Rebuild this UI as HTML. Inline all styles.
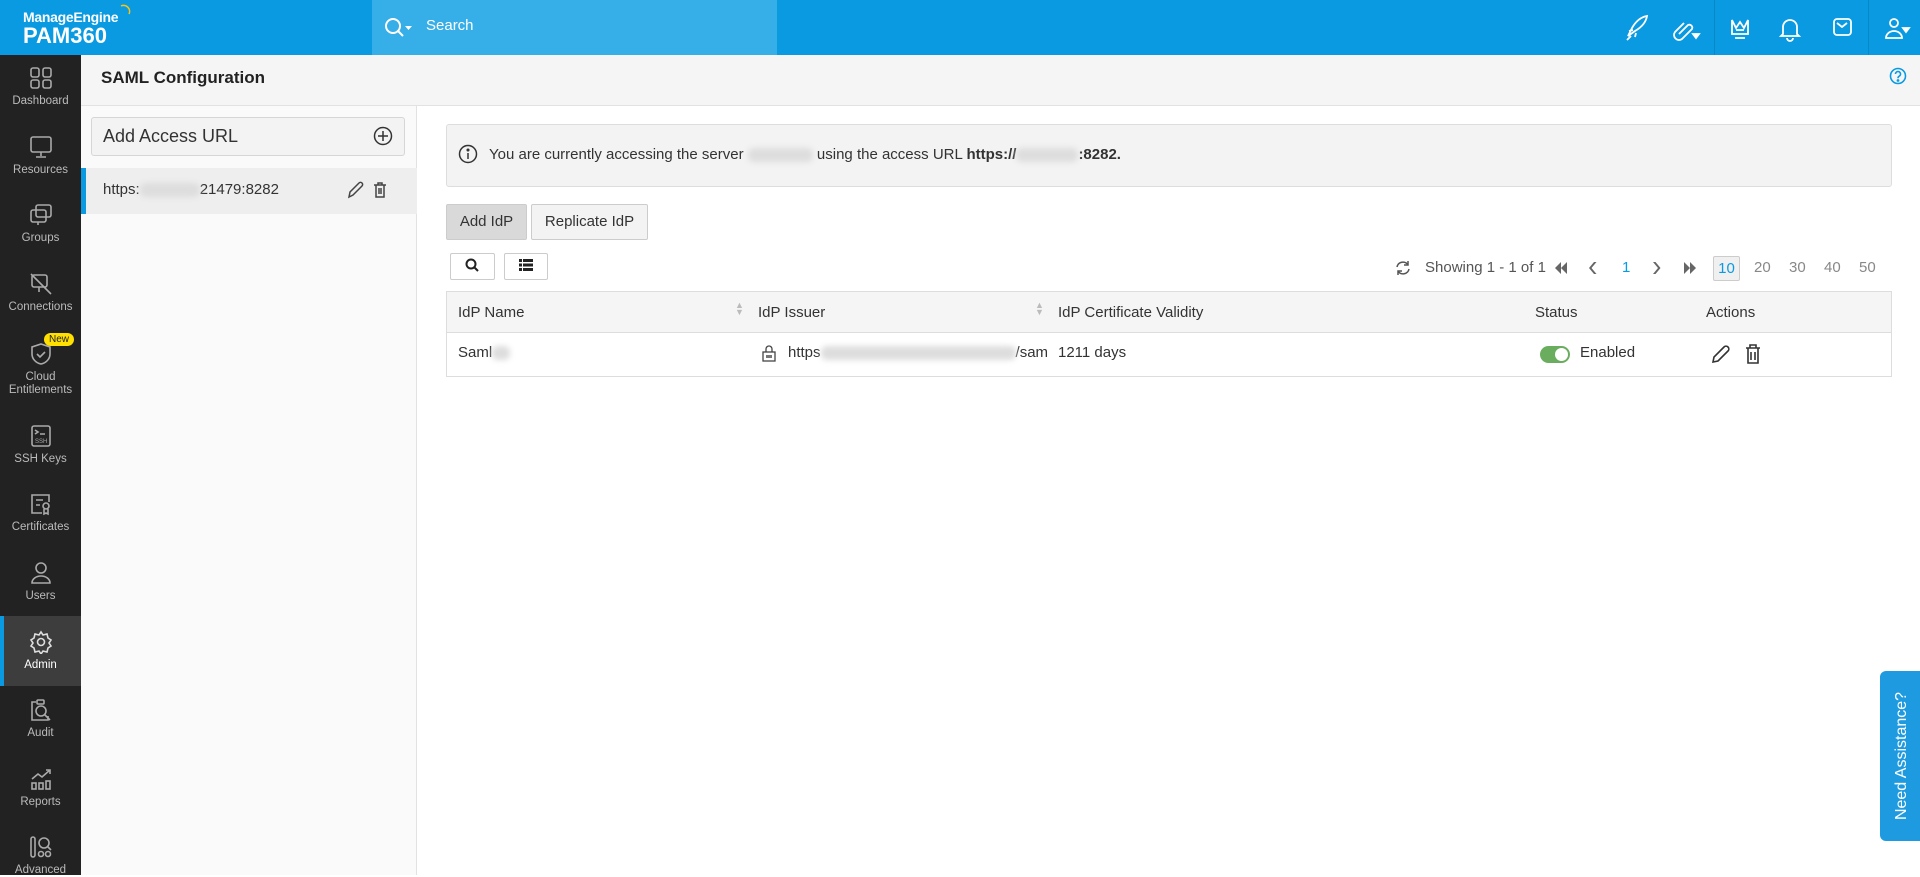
<!DOCTYPE html>
<html><head><meta charset="utf-8"><style>
*{box-sizing:border-box;margin:0;padding:0}
body{width:1920px;height:875px;overflow:hidden;font-family:"Liberation Sans",sans-serif;background:#fff;color:#333;position:relative;font-size:15px}
.abs{position:absolute}
#hdr{left:0;top:0;width:1920px;height:55px;background:#0a9ae2}
#srch{left:372px;top:0;width:405px;height:55px;background:#36aee8}
#side{left:0;top:55px;width:81px;height:820px;background:#222}
.si{position:absolute;left:0;width:81px;text-align:center;color:#bbb;font-size:11.5px;line-height:13px}
.si svg{display:block;margin:0 auto 5px}
#title{left:81px;top:55px;width:1839px;height:51px;background:#f5f5f5;border-bottom:1px solid #e2e2e2}
#lp{left:81px;top:106px;width:336px;height:769px;background:#fafafa;border-right:1px solid #e2e2e2}
.btn{position:absolute;border:1px solid #ccc;border-radius:2px;background:#f3f3f3;font-size:15px;color:#333;text-align:center}
.th{position:absolute;top:292px;font-size:15px;color:#333}
.blur{display:inline-block;background:#ddd;filter:blur(3px);height:14px;vertical-align:middle;border-radius:6px}
.pg{position:absolute;top:259px;font-size:15px;color:#888}
</style></head><body>
<div id="hdr" class="abs"></div>
<div id="srch" class="abs"></div>
<div class="abs" style="left:23px;top:9px;color:#fff;font-size:14px;font-weight:bold;letter-spacing:-0.3px">ManageEngine</div>
<div class="abs" style="left:23px;top:23px;color:#fff;font-size:22px;font-weight:bold">PAM360</div>
<svg class="abs" style="left:118px;top:4px" width="14" height="14"><path d="M3 2a6 6 0 0 1 8 8" stroke="#f5c518" stroke-width="1.5" fill="none"/></svg>
<svg class="abs" style="left:384px;top:16px" width="30" height="22"><circle cx="9" cy="10" r="7" stroke="#fff" stroke-width="2" fill="none"/><path d="M14 15l5 5" stroke="#fff" stroke-width="2"/><path d="M21 10h7l-3.5 4z" fill="#fff"/></svg>
<div class="abs" style="left:426px;top:17px;color:#fff;font-size:15px">Search</div>
<div class="abs" style="left:1714px;top:0;width:1px;height:55px;background:#0888c8"></div>
<div class="abs" style="left:1868px;top:0;width:1px;height:55px;background:#0888c8"></div>
<svg class="abs" style="left:1624px;top:14px" width="296" height="28" fill="none" stroke="#fff" stroke-width="1.8">
<path d="M4 22l4-8c4-7 9-11 15-12-1 6-5 11-12 15z M9 16l-4 1 M12 19l-1 4 M3 26l4-4"/>
<path d="M55 20l9-9a3 3 0 0 1 4 4l-10 10a5 5 0 0 1-7-7l9-9"/><path d="M69 20h6l-3 4z" fill="#fff"/>
<path d="M108 6l4 8 4-6 4 6 4-8v14h-16z M111 24h10 M112 16h8"/>
<path d="M159 20v-7a7 7 0 0 1 14 0v7l2 2h-18z M163 24a3 3 0 0 0 6 0"/>
<rect x="210" y="5" width="17" height="16" rx="3"/><path d="M213 9l5 4 5-4"/>
<circle cx="270" cy="9" r="4"/><path d="M262 24a8 7 0 0 1 16 0z"/><path d="M279 14h6l-3 4z" fill="#fff"/>
</svg>
<div id="side" class="abs"></div>
<div class="abs" style="left:0;top:616px;width:81px;height:70px;background:#3d3d3d"></div>
<div class="abs" style="left:0;top:616px;width:4px;height:70px;background:#0a9ae2"></div>
<div class="si" style="top:66px"><svg width="24" height="24" fill="none" stroke="#aaa" stroke-width="1.6"><rect x="2" y="2" width="8" height="9" rx="2"/><rect x="14" y="2" width="8" height="9" rx="2"/><rect x="2" y="14" width="8" height="8" rx="2"/><rect x="14" y="14" width="8" height="8" rx="2"/></svg>Dashboard</div>
<div class="si" style="top:135px"><svg width="24" height="24" fill="none" stroke="#aaa" stroke-width="1.6"><rect x="2" y="2" width="20" height="15" rx="2"/><path d="M12 17v4M7 22h10"/></svg>Resources</div>
<div class="si" style="top:203px"><svg width="24" height="24" fill="none" stroke="#aaa" stroke-width="1.6"><rect x="7" y="2" width="15" height="12" rx="2"/><rect x="2" y="7" width="15" height="12" rx="2"/><path d="M9 19v3"/></svg>Groups</div>
<div class="si" style="top:272px"><svg width="24" height="24" fill="none" stroke="#aaa" stroke-width="1.6"><rect x="3" y="3" width="15" height="12" rx="2"/><path d="M2 2l20 20M10 15v5"/></svg>Connections</div>
<div class="si" style="top:342px"><svg width="24" height="24" fill="none" stroke="#aaa" stroke-width="1.6"><path d="M12 2l9 3v7c0 5-4 9-9 10-5-1-9-5-9-10V5z"/><path d="M8 12l3 3 5-5"/></svg>Cloud<br>Entitlements</div>
<div class="abs" style="left:44px;top:333px;background:#ffe000;color:#222;font-size:10px;border-radius:8px;padding:1px 5px">New</div>
<div class="si" style="top:424px"><svg width="24" height="24" fill="none" stroke="#aaa" stroke-width="1.6"><rect x="3" y="2" width="18" height="20" rx="2"/><path d="M6 6l3 2-3 2M11 10h5"/><text x="6" y="19" font-size="6" fill="#aaa" stroke="none" font-family="Liberation Sans">SSH</text></svg>SSH Keys</div>
<div class="si" style="top:492px"><svg width="24" height="24" fill="none" stroke="#aaa" stroke-width="1.6"><path d="M20 10V3H3v18h10"/><path d="M7 8h7M7 13h4"/><circle cx="17" cy="14" r="3"/><path d="M15 17v5l2-1 2 1v-5"/></svg>Certificates</div>
<div class="si" style="top:561px"><svg width="24" height="24" fill="none" stroke="#aaa" stroke-width="1.6"><circle cx="12" cy="7" r="5"/><path d="M3 22a9 7 0 0 1 18 0z"/></svg>Users</div>
<div class="si" style="top:630px;color:#fff"><svg width="24" height="24" fill="none" stroke="#ddd" stroke-width="1.6"><path d="M12 2l2 3 4-1 1 4 3 2-2 3 2 3-3 2-1 4-4-1-2 3-2-3-4 1-1-4-3-2 2-3-2-3 3-2 1-4 4 1z"/><circle cx="12" cy="12" r="3.5"/></svg>Admin</div>
<div class="si" style="top:698px"><svg width="24" height="24" fill="none" stroke="#aaa" stroke-width="1.6"><path d="M7 4H3v18h16v-4"/><rect x="8" y="2" width="7" height="4" rx="1"/><circle cx="12" cy="13" r="5"/><path d="M16 17l5 5"/></svg>Audit</div>
<div class="si" style="top:767px"><svg width="24" height="24" fill="none" stroke="#aaa" stroke-width="1.6"><path d="M3 12l6-5 4 3 8-7M17 3h4v4"/><rect x="3" y="16" width="4" height="6"/><rect x="10" y="16" width="4" height="6"/><rect x="17" y="14" width="4" height="8"/></svg>Reports</div>
<div class="si" style="top:835px"><svg width="24" height="24" fill="none" stroke="#aaa" stroke-width="1.6"><rect x="2" y="2" width="4" height="20" rx="2"/><circle cx="15" cy="8" r="5"/><path d="M19 12l3 3"/><circle cx="12" cy="19" r="2.5"/><circle cx="19" cy="19" r="2.5"/></svg>Advanced</div>
<div id="title" class="abs"></div>
<div class="abs" style="left:101px;top:68px;font-size:17px;font-weight:bold;color:#222">SAML Configuration</div>
<svg class="abs" style="left:1889px;top:67px" width="18" height="18" fill="none" stroke="#0a9ae2" stroke-width="1.6"><circle cx="9" cy="9" r="7.5"/><path d="M6.5 7a2.5 2.5 0 1 1 3.5 2.3c-1 .5-1 1-1 2"/><circle cx="9" cy="13.5" r=".6" fill="#0a9ae2"/></svg>
<div id="lp" class="abs"></div>
<div class="abs" style="left:91px;top:117px;width:314px;height:39px;background:#f3f3f3;border:1px solid #d6d6d6;border-radius:3px"></div>
<div class="abs" style="left:103px;top:126px;font-size:18px;color:#333">Add Access URL</div>
<svg class="abs" style="left:373px;top:126px" width="20" height="20" fill="none" stroke="#333" stroke-width="1.5"><circle cx="10" cy="10" r="8.5"/><path d="M10 5v10M5 10h10"/></svg>
<div class="abs" style="left:81px;top:168px;width:336px;height:46px;background:#eee"></div>
<div class="abs" style="left:81px;top:168px;width:5px;height:46px;background:#0a9ae2"></div>
<div class="abs" style="left:103px;top:181px;font-size:15px;color:#333">https:<span class="blur" style="width:60px"></span>21479:8282</div>
<svg class="abs" style="left:346px;top:180px" width="50" height="20" fill="none" stroke="#444" stroke-width="1.5"><path d="M3 17l1-5 9-9a2 2 0 0 1 3 3l-9 9z"/><path d="M28 5h12M32 5V3h4v2M30 5v12h8V5M33 8v6M35 8v6"/></svg>
<div class="abs" style="left:446px;top:124px;width:1446px;height:63px;background:#f3f3f3;border:1px solid #ddd;border-radius:3px"></div>
<svg class="abs" style="left:458px;top:144px" width="20" height="20" fill="none" stroke="#333" stroke-width="1.5"><circle cx="10" cy="10" r="8.5"/><path d="M10 9v6"/><circle cx="10" cy="6" r=".8" fill="#333"/></svg>
<div class="abs" style="left:489px;top:146px;font-size:15px;color:#333">You are currently accessing the server <span class="blur" style="width:65px"></span> using the access URL <b>https://<span class="blur" style="width:62px"></span>:8282.</b></div>
<div class="btn" style="left:446px;top:204px;width:81px;height:36px;line-height:34px;background:#d9d9d9">Add IdP</div>
<div class="btn" style="left:531px;top:204px;width:117px;height:36px;line-height:34px">Replicate IdP</div>
<div class="btn" style="left:450px;top:253px;width:45px;height:27px;background:#fff"></div>
<svg class="abs" style="left:464px;top:257px" width="16" height="16" fill="none" stroke="#222" stroke-width="2"><circle cx="7" cy="7" r="4.5"/><path d="M10 10l4 4"/></svg>
<div class="btn" style="left:504px;top:253px;width:44px;height:27px;background:#fff"></div>
<svg class="abs" style="left:519px;top:258px" width="14" height="14" fill="#222"><rect x="0" y="1" width="3" height="3"/><rect x="4" y="1" width="10" height="3"/><rect x="0" y="5.5" width="3" height="3"/><rect x="4" y="5.5" width="10" height="3"/><rect x="0" y="10" width="3" height="3"/><rect x="4" y="10" width="10" height="3"/></svg>
<svg class="abs" style="left:1394px;top:259px" width="18" height="18" fill="none" stroke="#555" stroke-width="1.5"><path d="M3 8a6 6 0 0 1 11-2M15 10a6 6 0 0 1-11 2"/><path d="M14 2v4h-4M4 16v-4h4"/></svg>
<div class="pg" style="left:1425px;color:#555">Showing 1 - 1 of 1</div>
<svg class="abs" style="left:1554px;top:259px" width="150" height="18" fill="#666"><path d="M1 9l6-6v12zM7 9l6-6v12z"/><path d="M35 9l5-6h2.5l-5 6 5 6h-2.5z"/><path d="M99 3h2.5l5 6-5 6h-2.5l5-6z"/><path d="M130 3l6 6-6 6zM136 3l6 6-6 6z"/></svg>
<div class="pg" style="left:1622px;color:#0a9ae2">1</div>
<div class="abs" style="left:1713px;top:256px;width:27px;height:25px;background:#f0f0f0;border:1px solid #ccc;border-radius:2px;color:#0a9ae2;font-size:15px;text-align:center;line-height:23px">10</div>
<div class="pg" style="left:1754px">20</div>
<div class="pg" style="left:1789px">30</div>
<div class="pg" style="left:1824px">40</div>
<div class="pg" style="left:1859px">50</div>
<div class="abs" style="left:446px;top:291px;width:1446px;height:86px;border:1px solid #ddd"></div>
<div class="abs" style="left:447px;top:292px;width:1444px;height:41px;background:#f5f5f5;border-bottom:1px solid #ddd"></div>
<div class="th" style="left:458px;top:304px">IdP Name</div>
<div class="th" style="left:735px;top:302px;color:#bbb;font-size:9px;line-height:7px">▲<br>▼</div>
<div class="th" style="left:758px;top:304px">IdP Issuer</div>
<div class="th" style="left:1035px;top:302px;color:#bbb;font-size:9px;line-height:7px">▲<br>▼</div>
<div class="th" style="left:1058px;top:304px">IdP Certificate Validity</div>
<div class="th" style="left:1535px;top:304px">Status</div>
<div class="th" style="left:1706px;top:304px">Actions</div>
<div class="th" style="left:458px;top:344px">Saml<span class="blur" style="width:18px"></span></div>
<svg class="abs" style="left:761px;top:344px" width="16" height="18" fill="none" stroke="#444" stroke-width="1.3"><path d="M5 8V5a3 3 0 0 1 6 0v3"/><rect x="2" y="8" width="12" height="9"/><rect x="5" y="11" width="6" height="3" fill="#777" stroke="none"/></svg>
<div class="th" style="left:788px;top:344px">https<span class="blur" style="width:195px"></span>/sam</div>
<div class="th" style="left:1058px;top:344px">1211 days</div>
<div class="abs" style="left:1540px;top:346px;width:30px;height:17px;border-radius:9px;background:#6aad5e"></div>
<div class="abs" style="left:1555px;top:348px;width:13px;height:13px;border-radius:50%;background:#fff"></div>
<div class="th" style="left:1580px;top:344px">Enabled</div>
<svg class="abs" style="left:1710px;top:343px" width="60" height="22" fill="none" stroke="#333" stroke-width="1.6"><path d="M3 19l1-5 10-10a2.5 2.5 0 0 1 4 4l-10 10z"/><path d="M36 5h14M40 5V2h6v3M38 5v15h10V5M41 9v8M45 9v8"/></svg>
<div class="abs" style="left:1880px;top:671px;width:44px;height:170px;background:#1e9be0;border-radius:6px 0 0 6px"></div>
<div class="abs" style="left:1902px;top:756px;transform:translate(-50%,-50%) rotate(-90deg);color:#fff;font-size:16px;white-space:nowrap">Need Assistance?</div>
</body></html>
